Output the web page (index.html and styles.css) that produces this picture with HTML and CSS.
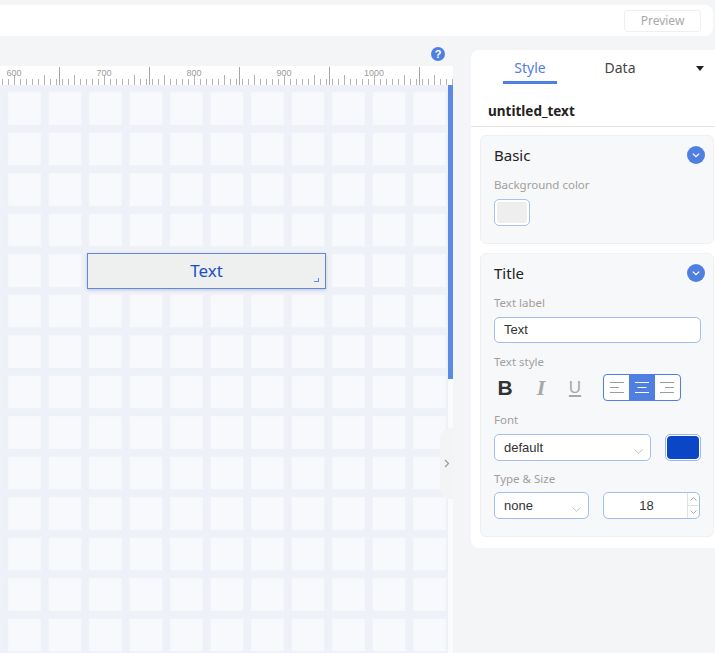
FILE: index.html
```html
<!DOCTYPE html>
<html lang="en">
<head>
<meta charset="utf-8">
<title>Text widget editor</title>
<link rel="stylesheet" href="styles.css">
</head>
<body>
<div class="app">
  <header class="topbar">
    <button class="preview-btn">Preview</button>
  </header>
  <div class="main">
    <section class="workspace">
      <div class="help-row"><span class="help-icon">?</span></div>
      <div class="ruler">
        <div class="ruler-labels"><span>600</span><span>700</span><span>800</span><span>900</span><span>1000</span></div>
      </div>
      <div class="canvas-wrap">
        <div class="canvas">
          <div class="text-widget">Text<span class="resize-corner"></span></div>
        </div>
        <div class="scrollbar"><div class="thumb"></div></div>
        <div class="collapse-tab">
          <svg width="6" height="9" viewBox="0 0 6 9"><polyline points="1,1 4.5,4.5 1,8" fill="none" stroke="#9a9a9a" stroke-width="1.2"/></svg>
        </div>
      </div>
    </section>

    <aside class="panel">
      <div class="tabs">
        <div class="tab active">Style</div>
        <div class="tab">Data</div>
        <span class="tab-menu"></span>
      </div>
      <div class="element-name">untitled_text</div>

      <div class="card">
        <div class="card-header">
          <span class="card-title">Basic</span>
          <svg class="chev-circle" width="18" height="18" viewBox="0 0 18 18"><circle cx="9" cy="9" r="9" fill="#4f80e1"/><polyline points="5.8,7.6 9,10.6 12.2,7.6" fill="none" stroke="#fff" stroke-width="1.3"/></svg>
        </div>
        <div class="field-label first">Background color</div>
        <div class="swatch"><div class="swatch-fill grey"></div></div>
      </div>

      <div class="card card-title-sec">
        <div class="card-header">
          <span class="card-title">Title</span>
          <svg class="chev-circle" width="18" height="18" viewBox="0 0 18 18"><circle cx="9" cy="9" r="9" fill="#4f80e1"/><polyline points="5.8,7.6 9,10.6 12.2,7.6" fill="none" stroke="#fff" stroke-width="1.3"/></svg>
        </div>
        <div class="field-label first">Text label</div>
        <div class="input">Text</div>

        <div class="field-label tight">Text style</div>
        <div class="style-row">
          <span class="fmt fmt-b">B</span>
          <span class="fmt fmt-i">I</span>
          <span class="fmt fmt-u">U</span>
          <div class="align-group">
            <span class="align-btn">
              <svg width="14" height="11" viewBox="0 0 14 11"><path d="M0 0.5H14M0 5.5H9M0 10.5H14" stroke="#9d9d9d" stroke-width="1.2"/></svg>
            </span>
            <span class="align-btn on">
              <svg width="14" height="11" viewBox="0 0 14 11"><path d="M0 0.5H14M2.5 5.5H11.5M0 10.5H14" stroke="#fff" stroke-width="1.2"/></svg>
            </span>
            <span class="align-btn">
              <svg width="14" height="11" viewBox="0 0 14 11"><path d="M0 0.5H14M5 5.5H14M0 10.5H14" stroke="#9d9d9d" stroke-width="1.2"/></svg>
            </span>
          </div>
        </div>

        <div class="field-label">Font</div>
        <div class="row">
          <div class="select select-font">default
            <svg class="caret" width="9" height="5" viewBox="0 0 9 5"><polyline points="0.5,0.5 4.5,4.3 8.5,0.5" fill="none" stroke="#c4c4c4" stroke-width="1"/></svg>
          </div>
          <div class="color-btn"><div class="swatch-fill blue"></div></div>
        </div>

        <div class="field-label short">Type &amp; Size</div>
        <div class="row row-size">
          <div class="select select-type">none
            <svg class="caret" width="9" height="5" viewBox="0 0 9 5"><polyline points="0.5,0.5 4.5,4.3 8.5,0.5" fill="none" stroke="#c4c4c4" stroke-width="1"/></svg>
          </div>
          <div class="number">
            <span class="num-value">18</span>
            <span class="spinner">
              <span class="spin">
                <svg width="7" height="4" viewBox="0 0 7 4"><polyline points="0.5,3.5 3.5,0.6 6.5,3.5" fill="none" stroke="#9a9a9a" stroke-width="0.9"/></svg>
              </span>
              <span class="spin spin-down">
                <svg width="7" height="4" viewBox="0 0 7 4"><polyline points="0.5,0.5 3.5,3.4 6.5,0.5" fill="none" stroke="#9a9a9a" stroke-width="0.9"/></svg>
              </span>
            </span>
          </div>
        </div>
      </div>
    </aside>
  </div>
</div>
</body>
</html>
```

FILE: styles.css
```css
* { box-sizing: border-box; }
html, body { margin: 0; padding: 0; }
body {
  width: 715px;
  height: 653px;
  overflow: hidden;
  background: #f4f5f7;
  font-family: "Noto Sans", "Liberation Sans", sans-serif;
  color: #222;
}
.app { display: flex; flex-direction: column; height: 653px; }

/* top bar */
.topbar {
  flex: none;
  margin: 5px 0 0 -20px;
  width: 733px;
  height: 31px;
  background: #fff;
  border-radius: 8px;
  display: flex;
  align-items: center;
  justify-content: flex-end;
  padding-right: 12px;
}
.preview-btn {
  width: 77px;
  height: 22px;
  padding: 0;
  border: 1px solid #efefef;
  border-radius: 3px;
  background: #fff;
  color: #a8a8a8;
  font: 12px/20px "Noto Sans", sans-serif;
}

.main { display: flex; flex: 1; min-height: 0; }

/* workspace */
.workspace { flex: none; width: 453px; display: flex; flex-direction: column; }
.help-row {
  flex: none;
  height: 30px;
  display: flex;
  justify-content: flex-end;
  padding: 11px 8px 0 0;
}
.help-icon {
  width: 14px;
  height: 14px;
  border-radius: 50%;
  background: #4f80e1;
  color: #fff;
  font: bold 11px/14px "Liberation Sans", sans-serif;
  text-align: center;
}
.ruler {
  flex: none;
  height: 19px;
  overflow: hidden;
  background-color: #fff;
  background-image:
    linear-gradient(to right, #a6a6a6 1px, transparent 1px),
    linear-gradient(to right, #b4b4b4 1px, transparent 1px),
    linear-gradient(to right, #b4b4b4 1px, transparent 1px);
  background-size: 90px 18px, 30px 10px, 6px 6px;
  background-position: 59px 1px, 14px 9px, 2px 13px;
  background-repeat: repeat-x;
}
.ruler-labels { display: flex; margin-left: -31px; padding-top: 1px; }
.ruler-labels span {
  flex: none;
  width: 90px;
  text-align: center;
  font: 9px/12px "Liberation Sans", sans-serif;
  color: #9c9c9c;
}

.canvas-wrap { flex: 1; display: flex; position: relative; min-height: 0; }
.canvas {
  position: relative;
  width: 448px;
  background-color: #f8f9fc;
  background-image:
    linear-gradient(to right, #eef1f8 8px, transparent 8px),
    linear-gradient(to bottom, #eef1f8 8px, transparent 8px);
  background-size: 40.5px 40.5px;
  background-position: 0.3px -0.7px;
}
.scrollbar { width: 5px; background: #fafbfc; }
.thumb { height: 294px; background: #5b8ae6; }

.text-widget {
  position: absolute;
  left: 87px;
  top: 168px;
  width: 239px;
  height: 36px;
  background: #eeefef;
  border: 1px solid #6089df;
  box-shadow: 0 1px 3px rgba(0, 0, 0, 0.18);
  display: flex;
  align-items: center;
  justify-content: center;
  color: #1d4fc4;
  font: 17px/20px "Noto Sans", sans-serif;
}
.resize-corner {
  position: absolute;
  right: 6px;
  bottom: 6px;
  width: 5px;
  height: 4px;
  border-right: 1px solid #6089df;
  border-bottom: 1px solid #6089df;
}
.collapse-tab {
  position: absolute;
  left: 440px;
  top: 343px;
  width: 14px;
  height: 71px;
  background: #f3f4f6;
  border-radius: 10px 0 0 10px;
  display: flex;
  align-items: center;
  padding-left: 4px;
}

/* panel */
.panel {
  flex: none;
  margin: 14px 0 0 18px;
  width: 252px;
  height: 498px;
  background: #fff;
  border-radius: 8px;
}
.tabs { display: flex; height: 34px; padding-left: 32px; }
.tab {
  width: 54px;
  height: 34px;
  padding-top: 8px;
  text-align: center;
  font-size: 14px;
  line-height: 20px;
  color: #444;
}
.tab + .tab { margin-left: 36px; }
.tab.active { color: #4f80e1; border-bottom: 3px solid #4f80e1; }
.tab-menu {
  margin: 16px 19px 0 auto;
  width: 0;
  height: 0;
  border-left: 4px solid transparent;
  border-right: 4px solid transparent;
  border-top: 5px solid #222;
}
.element-name {
  height: 43px;
  padding: 17px 0 0 17px;
  font-weight: bold;
  font-size: 13.5px;
  line-height: 20px;
  color: #222;
  border-bottom: 1px solid #e4e4e4;
}

.card {
  margin: 8px 9px 0 9px;
  background: #f7f8fa;
  border: 1px solid #eff0f2;
  border-radius: 6px;
  padding: 0 12px 17px 13px;
}
.card-title-sec { margin-top: 9px; }
.card-header {
  display: flex;
  align-items: center;
  justify-content: space-between;
  height: 37px;
  margin-right: -4px;
}
.card-title { font-size: 15px; line-height: 20px; color: #222; }
.chev-circle { display: block; }

.field-label {
  height: 16px;
  margin: 11px 0 6px;
  font-size: 11.5px;
  line-height: 16px;
  color: #a29e9a;
}
.field-label.first { margin-top: 4px; }
.field-label.tight { margin-bottom: 4px; }
.field-label.short { margin-top: 10px; margin-bottom: 5px; }

.swatch {
  width: 36px;
  height: 27px;
  border: 1px solid #a9c1ee;
  border-radius: 5px;
  background: #fff;
  padding: 2px;
}
.swatch-fill { height: 100%; border-radius: 3px; }
.swatch-fill.grey { background: #eeeeee; }
.swatch-fill.blue { background: #0b46c6; border-radius: 4px; }

.input {
  height: 26px;
  border: 1px solid #a3bff0;
  border-radius: 5px;
  background: #fff;
  padding-left: 9px;
  font: 13px/24px "Liberation Sans", sans-serif;
  color: #333;
}

.style-row { display: flex; align-items: center; height: 27px; }
.fmt { width: 22px; text-align: center; }
.fmt-b { font: bold 21px/27px "Liberation Sans", sans-serif; color: #333; }
.fmt-i { margin-left: 14px; font: italic bold 22px/27px "Liberation Serif", serif; color: #a8a8a8; }
.fmt-u { margin-left: 12px; font: 17px/27px "Liberation Sans", sans-serif; color: #a8a8a8; text-decoration: underline; text-decoration-thickness: 2px; text-underline-offset: 2px; }
.align-group {
  margin-left: 17px;
  display: flex;
  width: 78px;
  height: 27px;
  border: 1px solid #4f80e1;
  border-radius: 4px;
  overflow: hidden;
  background: #fff;
}
.align-btn { flex: 1; display: flex; align-items: center; justify-content: center; }
.align-btn.on { background: #4f80e1; }

.row { display: flex; height: 27px; }
.select {
  position: relative;
  height: 27px;
  border: 1px solid #a3bff0;
  border-radius: 5px;
  background: #fff;
  padding-left: 9px;
  font: 13px/25px "Liberation Sans", sans-serif;
  color: #333;
}
.select-font { width: 157px; }
.select-type { width: 95px; }
.caret { position: absolute; right: 7px; top: 14px; }
.color-btn {
  margin-left: 14px;
  width: 36px;
  height: 27px;
  border: 1px solid #9ab8ea;
  border-radius: 5px;
  background: #fff;
  padding: 1px;
}
.number {
  margin-left: 14px;
  width: 97px;
  height: 27px;
  border: 1px solid #a3bff0;
  border-radius: 5px;
  background: #fff;
  display: flex;
  font: 13px/25px "Liberation Sans", sans-serif;
  color: #333;
}
.num-value { flex: 1; text-align: center; padding-left: 2px; }
.spinner {
  width: 12px;
  display: flex;
  flex-direction: column;
  border-left: 1px solid #e2e2e2;
}
.spin { flex: 1; display: flex; align-items: center; justify-content: center; }
.spin-down { border-top: 1px solid #e2e2e2; }
```
